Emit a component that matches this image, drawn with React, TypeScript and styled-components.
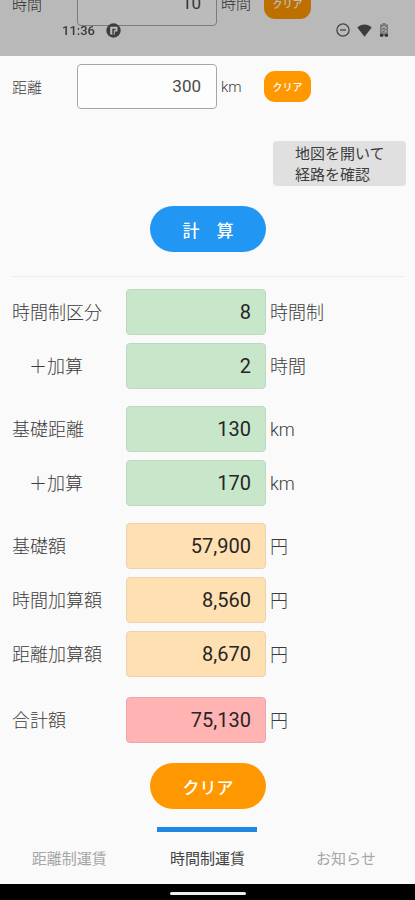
import React, { useState } from "react";
import styled, { createGlobalStyle } from "styled-components";

const GlobalStyle = createGlobalStyle`
  *, *::before, *::after { box-sizing: border-box; }
  body {
    margin: 0;
    background: #fafafa;
    color: #3c3c3c;
    font-family: Roboto, "Noto Sans CJK JP", sans-serif;
  }
  button, input { font-family: inherit; }
`;

const Screen = styled.div`
  display: flex;
  flex-direction: column;
  min-height: 100vh;
  overflow: hidden;
`;

const StatusBar = styled.header`
  position: fixed;
  inset: 0 0 auto 0;
  z-index: 1;
  display: flex;
  align-items: center;
  justify-content: space-between;
  height: 56px;
  padding: 4px 26px 0 62px;
  background: rgba(0, 0, 0, 0.26);
  color: #3a3a3a;
  font-size: 13px;
  font-weight: 500;
  pointer-events: none;
`;

const StatusGroup = styled.div<{ $gap: number }>`
  display: flex;
  align-items: center;
  gap: ${(p) => p.$gap}px;

  svg { display: block; }
`;

/* The form is scrolled up so that its first row sits behind the status bar. */
const Content = styled.main`
  display: flex;
  flex: 1;
  flex-direction: column;
  margin-top: -19px;
  padding: 0 9px 18px 12px;
`;

const InputRows = styled.div`
  display: grid;
  gap: 38px;
`;

const InputRow = styled.div`
  display: grid;
  grid-template-columns: 65px minmax(0, 140px) 39px auto;
  align-items: center;
  justify-content: start;
  font-size: 15px;
  font-weight: 300;
  line-height: 20px;
`;

const ResultGroups = styled.div`
  display: grid;
  gap: 17px;
  margin-top: 12px;
`;

const ResultGroup = styled.div<{ $spaced?: boolean }>`
  display: grid;
  gap: 8px;
  padding-top: ${(p) => (p.$spaced ? 3 : 0)}px;
`;

const ResultRow = styled.div`
  display: grid;
  grid-template-columns: 114px minmax(0, 140px) auto;
  align-items: center;
  justify-content: start;
  font-size: 18px;
  font-weight: 300;
  line-height: 24px;
`;

const Label = styled.label<{ $indent?: boolean }>`
  padding-top: 2px;
  padding-left: ${(p) => (p.$indent ? 17 : 0)}px;
  white-space: nowrap;
`;

const Unit = styled.span`
  padding-top: 1px;
  padding-left: 4px;
  white-space: nowrap;
`;

const NumberInput = styled.input`
  width: 100%;
  height: 45px;
  padding: 0 15px 2px;
  border: 1px solid #a6a6a6;
  border-radius: 4px;
  outline: none;
  background: #fdfdfd;
  color: #4a4a4a;
  font-size: 17px;
  text-align: right;
`;

type Tone = "green" | "orange" | "red";

const tones: Record<Tone, { fill: string; edge: string }> = {
  green: { fill: "#c8e6c9", edge: "#bdd8be" },
  orange: { fill: "#ffe0b2", edge: "#ead2ac" },
  red: { fill: "#ffb3b3", edge: "#eba6a6" },
};

const ResultInput = styled.input<{ $tone: Tone }>`
  width: 100%;
  height: 46px;
  padding: 0 14px 1px;
  border: 1px solid ${(p) => tones[p.$tone].edge};
  border-radius: 4px;
  outline: none;
  background: ${(p) => tones[p.$tone].fill};
  color: #262626;
  font-size: 20px;
  text-align: right;
`;

const ClearButton = styled.button`
  width: 47px;
  height: 31px;
  margin-left: 8px;
  padding: 0;
  border: 0;
  border-radius: 11px;
  background: #ff9800;
  color: #fff;
  font-size: 10px;
  font-weight: 500;
`;

const MapButton = styled.button`
  align-self: flex-end;
  width: 133px;
  margin-top: 32px;
  padding: 3px 8px 0 22px;
  border: 0;
  border-radius: 4px;
  background: #e0e0e0;
  color: #3c3c3c;
  font-size: 15px;
  line-height: 21px;
  text-align: left;
  white-space: nowrap;
`;

const PillButton = styled.button<{ $color: string }>`
  align-self: center;
  width: 116px;
  height: 46px;
  margin: 20px 2px 0 0;
  padding: 0;
  border: 0;
  border-radius: 23px;
  background: ${(p) => p.$color};
  color: #fff;
  font-size: 17px;
  font-weight: 500;
`;

const Divider = styled.hr`
  width: calc(100% - 2px);
  height: 1px;
  margin: 24px 2px 0 0;
  border: 0;
  background: #ececec;
`;

const Tabs = styled.nav`
  display: grid;
  grid-template-columns: repeat(3, 1fr);
  justify-items: center;
  height: 57px;
`;

const Tab = styled.button<{ $active: boolean }>`
  width: 100px;
  padding: 0 0 2px;
  border: 0;
  border-top: 5px solid ${(p) => (p.$active ? "#1e88e5" : "transparent")};
  background: none;
  color: ${(p) => (p.$active ? "#424242" : "#a6a6a6")};
  font-size: 15px;
  white-space: nowrap;
`;

const GestureBar = styled.footer`
  display: grid;
  place-items: center;
  height: 16px;
  background: #000;
`;

const GestureHandle = styled.div`
  width: 76px;
  height: 3px;
  margin-top: 2px;
  border-radius: 2px;
  background: #eee;
`;

function AppBadgeIcon() {
  return (
    <svg width="15" height="15" viewBox="0 0 15 15" aria-hidden="true">
      <circle cx="7.5" cy="7.5" r="7.2" fill="#3d3d3d" />
      <path d="M4.200 3.800h7.300v4.700H8.800v3H4.200z" fill="#bcbcbc" />
      <path d="M6.300 5.800v5.700h1.500V7.300h1.700V5.800z" fill="#3d3d3d" />
    </svg>
  );
}

function DoNotDisturbIcon() {
  return (
    <svg width="14" height="14" viewBox="0 0 14 14" fill="none" stroke="#444" strokeWidth="1.3" aria-hidden="true">
      <circle cx="7" cy="7" r="6.1" />
      <path d="M4 7h6" />
    </svg>
  );
}

function WifiIcon() {
  return (
    <svg width="15" height="13" viewBox="0 0 15 13" aria-hidden="true">
      <path d="M.3 3.500C4.300-.6 10.700-.6 14.700 3.500L7.500 12.800z" fill="#3d3d3d" />
    </svg>
  );
}

function BatteryIcon() {
  return (
    <svg width="10" height="14" viewBox="0 0 10 14" aria-hidden="true">
      <path d="M3.500 0h3v1.500H9V13.500H1V1.500h2.500z" fill="#777" />
      <path d="M2.500 4.500L5 2.500l2.500 2v5h-5z" fill="#aaa" />
      <path d="M3 7l2-2 2 2M3.500 9L6 7.500" fill="none" stroke="#555" />
      <path d="M1 11h3v2.500H1zM6 11h3v2.500H6z" fill="#333" />
    </svg>
  );
}

interface Result {
  id: string;
  label: string;
  value: string;
  unit: string;
  tone: Tone;
  indent?: boolean;
}

const resultGroups: Result[][] = [
  [
    { id: "hours-class", label: "時間制区分", value: "8", unit: "時間制", tone: "green" },
    { id: "hours-extra", label: "＋加算", value: "2", unit: "時間", tone: "green", indent: true },
  ],
  [
    { id: "base-distance", label: "基礎距離", value: "130", unit: "km", tone: "green" },
    { id: "distance-extra", label: "＋加算", value: "170", unit: "km", tone: "green", indent: true },
  ],
  [
    { id: "base-fare", label: "基礎額", value: "57,900", unit: "円", tone: "orange" },
    { id: "hours-fare", label: "時間加算額", value: "8,560", unit: "円", tone: "orange" },
    { id: "distance-fare", label: "距離加算額", value: "8,670", unit: "円", tone: "orange" },
  ],
  [{ id: "total", label: "合計額", value: "75,130", unit: "円", tone: "red" }],
];

const tabNames = ["距離制運賃", "時間制運賃", "お知らせ"];

export default function App() {
  const [hours, setHours] = useState("10");
  const [distance, setDistance] = useState("300");
  const [tab, setTab] = useState(1);

  return (
    <Screen>
      <GlobalStyle />
      <StatusBar>
        <StatusGroup $gap={11}>
          <span>11:36</span>
          <AppBadgeIcon />
        </StatusGroup>
        <StatusGroup $gap={7}>
          <DoNotDisturbIcon />
          <WifiIcon />
          <BatteryIcon />
        </StatusGroup>
      </StatusBar>

      <Content>
        <InputRows>
          <InputRow>
            <Label htmlFor="hours">時間</Label>
            <NumberInput id="hours" value={hours} onChange={(e) => setHours(e.target.value)} />
            <Unit>時間</Unit>
            <ClearButton type="button" onClick={() => setHours("")}>クリア</ClearButton>
          </InputRow>
          <InputRow>
            <Label htmlFor="distance">距離</Label>
            <NumberInput id="distance" value={distance} onChange={(e) => setDistance(e.target.value)} />
            <Unit>km</Unit>
            <ClearButton type="button" onClick={() => setDistance("")}>クリア</ClearButton>
          </InputRow>
        </InputRows>

        <MapButton type="button">
          地図を開いて
          <br />
          経路を確認
        </MapButton>
        <PillButton type="button" $color="#2196f3">計　算</PillButton>
        <Divider />

        <ResultGroups>
          {resultGroups.map((group) => (
            <ResultGroup key={group[0].id} $spaced={group[0].tone === "red"}>
              {group.map((r) => (
                <ResultRow key={r.id}>
                  <Label htmlFor={r.id} $indent={r.indent}>{r.label}</Label>
                  <ResultInput id={r.id} $tone={r.tone} value={r.value} readOnly />
                  <Unit>{r.unit}</Unit>
                </ResultRow>
              ))}
            </ResultGroup>
          ))}
        </ResultGroups>

        <PillButton type="button" $color="#ff9800">クリア</PillButton>
      </Content>

      <Tabs>
        {tabNames.map((name, i) => (
          <Tab key={name} type="button" $active={i === tab} onClick={() => setTab(i)}>
            {name}
          </Tab>
        ))}
      </Tabs>
      <GestureBar>
        <GestureHandle />
      </GestureBar>
    </Screen>
  );
}
